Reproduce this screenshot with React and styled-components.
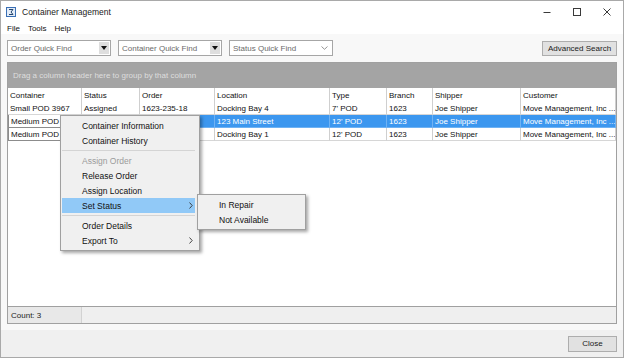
import React from 'react'
import styled, { createGlobalStyle } from 'styled-components'

const GlobalStyle = createGlobalStyle`
  body {
    margin: 0;
    background: #ffffff;
    font-family: "Liberation Sans", Arial, sans-serif;
  }
`

const columns = ['Container', 'Status', 'Order', 'Location', 'Type', 'Branch', 'Shipper', 'Customer']

// status/order of rows 2 and 3 sit under the context menu, so they are left blank
const rows = [
  { id: 1, cells: ['Small POD 3967', 'Assigned', '1623-235-18', 'Docking Bay 4', "7' POD", '1623', 'Joe Shipper', 'Move Management, Inc ...'] },
  { id: 2, selected: true, cells: ['Medium POD', '', '', '123 Main Street', "12' POD", '1623', 'Joe Shipper', 'Move Management, Inc ...'] },
  { id: 3, cells: ['Medium POD', '', '', 'Docking Bay 1', "12' POD", '1623', 'Joe Shipper', 'Move Management, Inc ...'] },
]

const menuItems = [
  { label: 'Container Information' },
  { label: 'Container History' },
  { sep: true },
  { label: 'Assign Order', disabled: true },
  { label: 'Release Order' },
  { label: 'Assign Location' },
  { label: 'Set Status', sub: true, active: true },
  { sep: true },
  { label: 'Order Details' },
  { label: 'Export To', sub: true },
]

const Chevron = () => (
  <svg width="4" height="7" viewBox="0 0 4 7">
    <path d="M0.5 0.5 L3.2 3.5 L0.5 6.5" fill="none" stroke="#333" strokeWidth="0.9" />
  </svg>
)

const App = () => {
  return (
    <>
      <GlobalStyle />
      <Window>
        <TitleBar>
          <svg width="10" height="10" viewBox="0 0 10 10">
            <rect x="0.5" y="0.5" width="9" height="9" fill="#e3ecf8" stroke="#3a6fb5" />
            <path d="M3 2.5 H7 L5 5 L7 7.5 H3" fill="none" stroke="#24466f" strokeWidth="1" />
          </svg>
          <Title>Container Management</Title>
          <WinControls>
            <WinButton>
              <svg width="8" height="8" viewBox="0 0 8 8"><path d="M0.5 4.5 H7.5" stroke="#3a3a3a" /></svg>
            </WinButton>
            <WinButton>
              <svg width="8" height="8" viewBox="0 0 8 8"><rect x="0.5" y="0.5" width="7" height="7" fill="none" stroke="#3a3a3a" /></svg>
            </WinButton>
            <WinButton>
              <svg width="8" height="8" viewBox="0 0 8 8"><path d="M0.5 0.5 L7.5 7.5 M7.5 0.5 L0.5 7.5" stroke="#3a3a3a" /></svg>
            </WinButton>
          </WinControls>
        </TitleBar>

        <MenuBar>
          <MenuLabel>File</MenuLabel>
          <MenuLabel>Tools</MenuLabel>
          <MenuLabel>Help</MenuLabel>
        </MenuBar>

        <Toolbar>
          <Combo>
            <ComboText>Order Quick Find</ComboText>
            <ComboArrow><Triangle /></ComboArrow>
          </Combo>
          <Combo>
            <ComboText>Container Quick Find</ComboText>
            <ComboArrow><Triangle /></ComboArrow>
          </Combo>
          <Combo>
            <ComboText>Status Quick Find</ComboText>
            <ComboChevron>
              <svg width="7" height="4" viewBox="0 0 7 4">
                <path d="M0.5 0.5 L3.5 3.3 L6.5 0.5" fill="none" stroke="#8a8a8a" strokeWidth="0.9" />
              </svg>
            </ComboChevron>
          </Combo>
          <Button $wide>Advanced Search</Button>
        </Toolbar>

        <GridFrame>
          <GroupPanel>Drag a column header here to group by that column</GroupPanel>
          <Grid>
            {columns.map((c) => (
              <HeaderCell key={c}>{c}</HeaderCell>
            ))}
            {rows.map((r) =>
              r.cells.map((v, i) => (
                <Cell key={r.id + '-' + i} $selected={r.selected && i > 0} $focus={i === 0 && r.id > 1}>{v}</Cell>
              ))
            )}
          </Grid>
          <GridFill />
          <StatusBar>
            <CountCell>Count: 3</CountCell>
          </StatusBar>
        </GridFrame>

        <Footer>
          <Button>Close</Button>
        </Footer>

        <ContextMenu>
          {menuItems.map((m, i) =>
            m.sep ? (
              <Separator key={'s' + i} />
            ) : (
              <MenuItem key={m.label} $disabled={m.disabled} $active={m.active}>
                <span>{m.label}</span>
                {m.sub && <Chevron />}
              </MenuItem>
            )
          )}
        </ContextMenu>

        <SubMenu>
          <MenuItem>In Repair</MenuItem>
          <MenuItem>Not Available</MenuItem>
        </SubMenu>
      </Window>
    </>
  )
}

export default App

const Window = styled.div`
  position: relative;
  width: 624px;
  height: 358px;
  box-sizing: border-box;
  border: 1px solid #a9a9a9;
  background: #f8f8f8;
  display: flex;
  flex-direction: column;
  overflow: hidden;
  font-family: "Liberation Sans", Arial, sans-serif;
`

const TitleBar = styled.div`
  height: 21px;
  background: #ffffff;
  display: flex;
  align-items: center;
  padding-left: 5px;
`

const Title = styled.div`
  margin-left: 6px;
  font-size: 8.5px;
  color: #1a1a1a;
`

const WinControls = styled.div`
  margin-left: auto;
  display: flex;
  height: 100%;
  margin-right: 1px;
`

const WinButton = styled.div`
  width: 30px;
  display: flex;
  align-items: center;
  justify-content: center;
`

const MenuBar = styled.div`
  height: 12px;
  background: #ffffff;
  display: flex;
  align-items: center;
  gap: 8px;
  padding-left: 6px;
`

const MenuLabel = styled.span`
  font-size: 8px;
  color: #111;
`

const Toolbar = styled.div`
  display: flex;
  align-items: flex-start;
  gap: 7px;
  padding: 6px 6px 6px 6px;
  height: 16px;
`

const Combo = styled.div`
  width: 104px;
  height: 16px;
  box-sizing: border-box;
  border: 1px solid #a6a6a6;
  background: #ffffff;
  display: flex;
  align-items: center;
  padding: 0 1px 0 3px;
`

const ComboText = styled.span`
  flex: 1;
  font-size: 8px;
  color: #6b6b6b;
  white-space: nowrap;
`

const ComboArrow = styled.div`
  width: 10px;
  height: 12px;
  background: #dedede;
  display: flex;
  align-items: center;
  justify-content: center;
`

const Triangle = styled.div`
  width: 0;
  height: 0;
  border-left: 3px solid transparent;
  border-right: 3px solid transparent;
  border-top: 4px solid #111;
`

const ComboChevron = styled.div`
  width: 10px;
  display: flex;
  justify-content: center;
  margin-right: 2px;
`

const Button = styled.div`
  margin-left: auto;
  width: ${(p) => (p.$wide ? '75px' : '49px')};
  height: ${(p) => (p.$wide ? '15px' : '16px')};
  margin-top: ${(p) => (p.$wide ? '1px' : '0')};
  box-sizing: border-box;
  border: 1px solid #adadad;
  background: #e1e1e1;
  display: flex;
  align-items: center;
  justify-content: center;
  font-size: 8px;
  color: #1a1a1a;
`

const GridFrame = styled.div`
  margin: 0 6px;
  height: 262px;
  box-sizing: border-box;
  border: 1px solid #a0a0a0;
  background: #ffffff;
  display: flex;
  flex-direction: column;
`

const GroupPanel = styled.div`
  height: 25px;
  background: #a4a4a4;
  color: #dedede;
  font-size: 8px;
  display: flex;
  align-items: center;
  padding-left: 5px;
`

const Grid = styled.div`
  display: grid;
  grid-template-columns: 74px 58px 75px 115px 57px 46px 88px 1fr;
  grid-auto-rows: 13px;
  grid-template-rows: 14px;
`

const HeaderCell = styled.div`
  font-size: 8px;
  color: #111;
  padding-left: 2px;
  display: flex;
  align-items: center;
  border-right: 1px solid #cfcfcf;
  white-space: nowrap;
  overflow: hidden;
`

const Cell = styled.div`
  font-size: 8px;
  padding-left: 2px;
  display: flex;
  align-items: center;
  white-space: nowrap;
  overflow: hidden;
  box-sizing: border-box;
  background: ${(p) => (p.$selected ? '#3c97ef' : '#ffffff')};
  color: ${(p) => (p.$selected ? '#ffffff' : '#111')};
  border-right: 1px solid ${(p) => (p.$selected ? '#6fb2f3' : p.$focus ? '#8c8c8c' : '#cfcfcf')};
  border-bottom: 1px solid ${(p) => (p.$selected ? '#6fb2f3' : p.$focus ? '#8c8c8c' : '#d6d6d6')};
  border-left: ${(p) => (p.$focus ? '1px solid #8c8c8c' : 'none')};
`

const GridFill = styled.div`
  flex: 1;
`

const StatusBar = styled.div`
  height: 16px;
  border-top: 1px solid #a0a0a0;
  background: #efefef;
  display: flex;
`

const CountCell = styled.div`
  width: 74px;
  background: #e8e8e8;
  border-right: 1px solid #d2d2d2;
  font-size: 8px;
  color: #222;
  display: flex;
  align-items: center;
  padding-left: 3px;
  box-sizing: border-box;
`

const Footer = styled.div`
  margin-top: 6px;
  flex: 1;
  background: #f0f0f0;
  display: flex;
  align-items: center;
  justify-content: flex-end;
  padding-right: 6px;
`

const ContextMenu = styled.div`
  position: absolute;
  left: 59px;
  top: 114px;
  width: 140px;
  box-sizing: border-box;
  border: 1px solid #a0a0a0;
  background: #f0f0f0;
  padding: 2px 4px 2px 1px;
  box-shadow: 2px 2px 3px rgba(0, 0, 0, 0.35);
`

const SubMenu = styled(ContextMenu)`
  left: 196px;
  top: 193px;
  width: 109px;
`

const MenuItem = styled.div`
  height: 15px;
  display: flex;
  align-items: center;
  justify-content: space-between;
  padding: 0 2px 0 20px;
  font-size: 8.5px;
  color: ${(p) => (p.$disabled ? '#9b9b9b' : '#111')};
  background: ${(p) => (p.$active ? '#91c9f7' : 'transparent')};
`

const Separator = styled.div`
  height: 5px;
  display: flex;
  align-items: center;
  &::after {
    content: '';
    flex: 1;
    height: 1px;
    background: #d4d4d4;
  }
`
